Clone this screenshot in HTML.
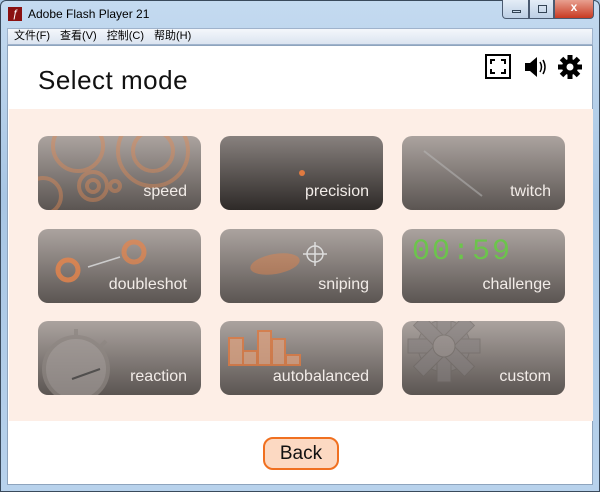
<!DOCTYPE html>
<html><head><meta charset="utf-8"><style>
*{margin:0;padding:0;box-sizing:border-box}
body{width:600px;height:492px;overflow:hidden;background:#a9c8e6;font-family:"Liberation Sans","Noto Sans CJK SC",sans-serif;position:relative}
.frame{position:absolute;inset:0;border:1px solid #3a4a5c;border-radius:6px 6px 0 0;background:linear-gradient(#c4daf0,#a8c6e4 40%,#b8d2ec)}
.title{position:absolute;left:28px;top:7px;font-size:12px;color:#000}
.logo{position:absolute;left:8px;top:7px;width:14px;height:14px;background:#8a1010;color:#fff;font-size:11px;line-height:14px;text-align:center;font-style:italic}
.menu{position:absolute;left:7px;top:28px;width:586px;height:17px;background:linear-gradient(#f4f7fb,#dbe4f0);border:1px solid #9fb3cc;font-size:11px;line-height:15px}
.menu span{margin-left:6px;margin-right:4px}
.content{position:absolute;left:7px;top:45px;width:586px;height:440px;background:#fff;border:1px solid #8ea4bd}
.pink{position:absolute;left:1px;top:63px;width:584px;height:312px;background:#fdeee6}
h1{position:absolute;left:30px;top:19px;font-weight:normal;font-size:26px;color:#111;letter-spacing:0.5px}
.btn{position:absolute;width:163px;height:74px;border-radius:10px;background:linear-gradient(#aba39f,#5b5552);overflow:hidden}
.btn.dark{background:linear-gradient(#88817e,#2e2a28)}
.lbl{position:absolute;right:14px;bottom:9px;color:#f2ece8;font-size:16px}
.back{position:absolute;left:255px;top:391px;width:76px;height:33px;border:2px solid #f07020;border-radius:10px;background:#fcd9c2;font-size:19px;text-align:center;line-height:29px;color:#111}
.wb{position:absolute;top:0;height:19px;border:1px solid #4a5a70;border-top:none}
</style></head><body>
<div class="frame"></div>
<div class="logo">ƒ</div>
<div class="title">Adobe Flash Player 21</div>
<div class="wb" style="left:502px;width:27px;background:linear-gradient(#e4edf7,#bccfe5);border-radius:0 0 0 4px"><div style="position:absolute;left:9px;top:10px;width:9px;height:3px;border:1px solid #345"></div></div>
<div class="wb" style="left:529px;width:25px;background:linear-gradient(#e4edf7,#bccfe5)"><div style="position:absolute;left:8px;top:5px;width:9px;height:8px;border:1px solid #345"></div></div>
<div class="wb" style="left:554px;width:40px;background:linear-gradient(#e8a090,#c83a22);border-radius:0 0 4px 0;color:#fff;text-align:center;font-weight:bold;font-size:12px">x</div>
<div class="menu"><span>文件(F)</span><span>查看(V)</span><span>控制(C)</span><span>帮助(H)</span></div>
<div class="content">
<h1>Select mode</h1>
<svg style="position:absolute;left:477px;top:8px" width="100" height="26">
<rect x="1" y="1" width="24" height="23" fill="none" stroke="#000" stroke-width="2"/>
<path d="M6 10V6h4M16 6h4v4M6 15v4h4M20 15v4h-4" stroke="#000" stroke-width="2" fill="none"/>
<path d="M40 9h5l7-6v20l-7-6h-5z" fill="#000"/>
<path d="M55 8q3 5 0 10M58 6q4 7 0 14" stroke="#000" stroke-width="1.5" fill="none"/>
<g transform="translate(85 13)"><circle r="8" fill="#000"/><g fill="#000"><rect x="-2.5" y="-12" width="5" height="24"/><rect x="-12" y="-2.5" width="24" height="5"/><rect x="-2.5" y="-12" width="5" height="24" transform="rotate(45)"/><rect x="-2.5" y="-12" width="5" height="24" transform="rotate(-45)"/></g><circle r="3.5" fill="#fff"/></g>
</svg>
<div class="pink">
<div class="btn" style="left:29px;top:27px"><svg width="163" height="74" style="position:absolute;left:0;top:0;opacity:.45" fill="none" stroke="#e08a55" stroke-width="4"><circle cx="55" cy="50" r="14"/><circle cx="55" cy="50" r="6"/><circle cx="77" cy="50" r="5"/><circle cx="115" cy="15" r="35"/><circle cx="115" cy="15" r="20"/><circle cx="40" cy="10" r="25"/><circle cx="5" cy="60" r="18"/></svg><div class="lbl">speed</div></div>
<div class="btn dark" style="left:211px;top:27px"><svg width="163" height="74" style="position:absolute"><circle cx="82" cy="37" r="3" fill="#e07a40"/></svg><div class="lbl">precision</div></div>
<div class="btn" style="left:393px;top:27px"><svg width="163" height="74" style="position:absolute"><path d="M22 15L80 60" stroke="#bbb" stroke-width="2" opacity=".5"/></svg><div class="lbl">twitch</div></div>
<div class="btn" style="left:29px;top:120px"><svg width="163" height="74" style="position:absolute" fill="none"><circle cx="30" cy="41" r="10" stroke="#e8854a" stroke-width="5" opacity=".8"/><circle cx="96" cy="23" r="10" stroke="#e8854a" stroke-width="5" opacity=".7"/><path d="M50 38L82 28" stroke="#ccc" stroke-width="1.5"/></svg><div class="lbl">doubleshot</div></div>
<div class="btn" style="left:211px;top:120px"><svg width="163" height="74" style="position:absolute"><ellipse cx="55" cy="35" rx="25" ry="10" fill="#e8854a" opacity=".45" transform="rotate(-10 55 35)"/><circle cx="95" cy="25" r="8" fill="none" stroke="#ddd" stroke-width="1.5"/><path d="M95 13v24M83 25h24" stroke="#ddd" stroke-width="1.5"/></svg><div class="lbl">sniping</div></div>
<div class="btn" style="left:393px;top:120px"><div style="position:absolute;left:10px;top:6px;color:#6cc44c;font-family:'Liberation Mono',monospace;font-size:30px;letter-spacing:2px">00:59</div><div class="lbl">challenge</div></div>
<div class="btn" style="left:29px;top:212px"><svg width="163" height="74" style="position:absolute;opacity:.7" fill="none" stroke="#8d8682" stroke-width="4"><circle cx="38" cy="48" r="32" fill="#a29b97"/><path d="M38 16v-8M62 26l6-6"/><path d="M34 58l28-10" stroke="#444" stroke-width="2"/></svg><div class="lbl">reaction</div></div>
<div class="btn" style="left:211px;top:212px"><svg width="163" height="74" style="position:absolute" fill="#d9a080" stroke="#e07a40" stroke-width="2" opacity=".8"><rect x="9" y="17" width="14" height="27"/><rect x="23" y="30" width="14" height="14"/><rect x="38" y="10" width="13" height="34"/><rect x="52" y="18" width="13" height="26"/><rect x="66" y="34" width="14" height="10"/></svg><div class="lbl">autobalanced</div></div>
<div class="btn" style="left:393px;top:212px"><svg width="163" height="74" style="position:absolute;opacity:.55"><g transform="translate(42 25)" fill="#858080" stroke="#6c6663"><circle r="26"/><rect x="-7" y="-36" width="14" height="72"/><rect x="-36" y="-7" width="72" height="14"/><rect x="-7" y="-36" width="14" height="72" transform="rotate(45)"/><rect x="-7" y="-36" width="14" height="72" transform="rotate(-45)"/><circle r="11" fill="#9a9390"/></g></svg><div class="lbl">custom</div></div>
</div>
<div class="back">Back</div>
</div>
</body></html>
